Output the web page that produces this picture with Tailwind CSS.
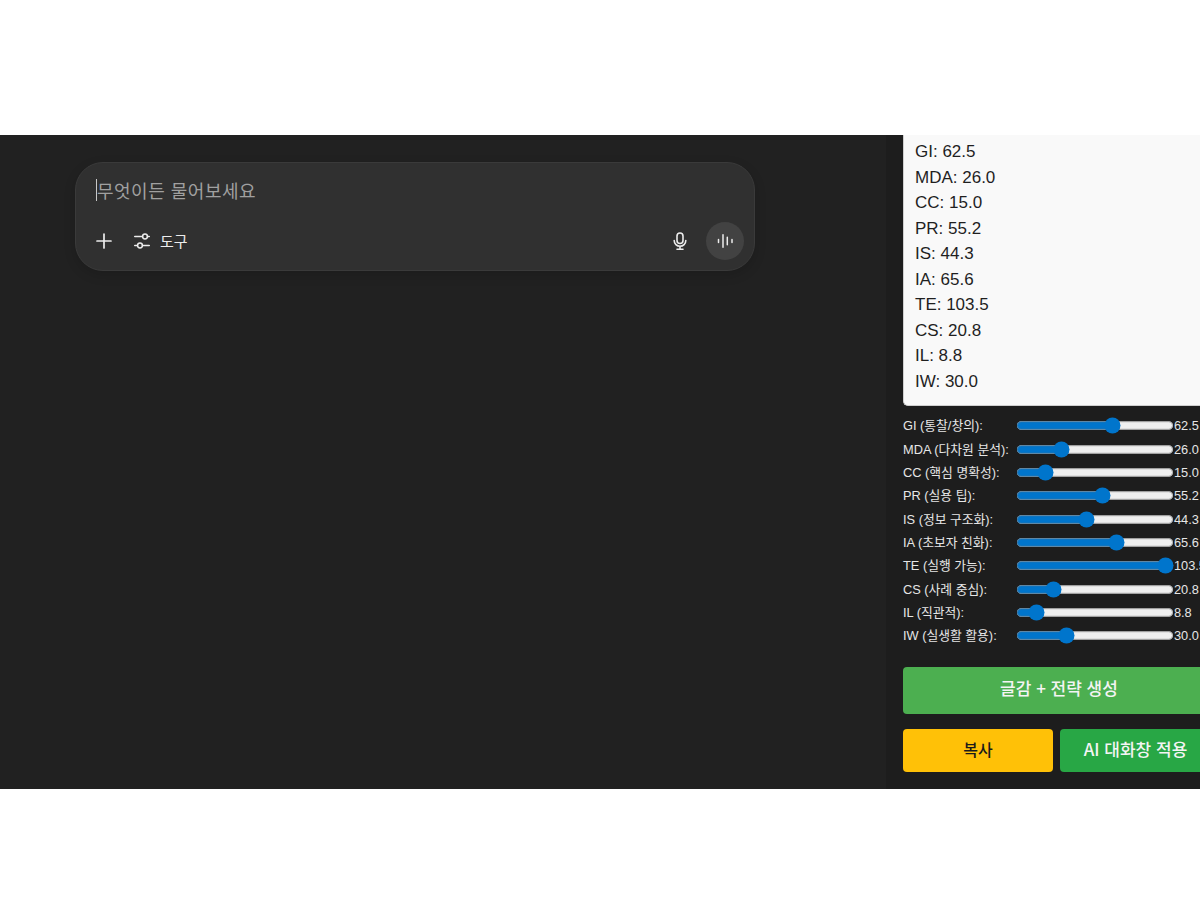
<!DOCTYPE html>
<html lang="ko">
  <head>
    <meta charset="UTF-8">
    <title>Chat</title>
    <script src="https://cdn.jsdelivr.net/npm/@tailwindcss/browser@4"></script>
  </head>
  <body class="bg-white font-['Liberation_Sans','Noto_Sans_CJK_KR',sans-serif] overflow-hidden">
    <div class="h-[900px] w-[1200px] pt-[135px] pb-[111px]">
      <div class="flex h-[654px] overflow-hidden bg-[#212121]">
        <!-- chat area -->
        <main class="w-[886px] flex-none pt-[27px] pl-[75px]">
          <div class="h-[109px] w-[680px] rounded-[28px] border border-[#3a3a3a] bg-[#303030] shadow-[0_4px_12px_rgba(0,0,0,0.15)] pt-[15px] px-[20px]">
            <div class="flex h-[24px] items-center text-[18px] tracking-[0.5px] text-[#a0a0a0] font-['Noto_Sans_CJK_KR',sans-serif]">
              <span class="h-[22px] w-px bg-[#c8c8c8]"></span>무엇이든 물어보세요
            </div>
            <div class="mt-[20px] flex h-[38px] items-center">
              <svg class="-ml-px h-[18px] w-[18px]" viewBox="0 0 18 18" fill="none" stroke="#ececec" stroke-width="1.7" stroke-linecap="round"><path d="M9 2v14M2 9h14"/></svg>
              <svg class="ml-[21px] h-[16px] w-[16px]" viewBox="0 0 16 16" fill="none" stroke="#ececec" stroke-width="1.5" stroke-linecap="round"><path d="M.7 3.5h7.8M13.5 3.5h1.8M.7 12.5h2.3M8.5 12.5h6.8"/><circle cx="11" cy="3.5" r="2.4"/><circle cx="6" cy="12.5" r="2.4"/></svg>
              <span class="ml-[10px] text-[15px] text-[#ececec] font-['Noto_Sans_CJK_KR',sans-serif]">도구</span>
              <svg class="ml-auto h-[20px] w-[20px]" viewBox="0 0 20 20" fill="none" stroke="#ececec" stroke-width="1.6" stroke-linecap="round"><rect x="7" y="2" width="6" height="10.5" rx="3"/><path d="M4.2 9.5a5.8 5.8 0 0 0 11.6 0M10 15.5v2.5M7 18.2h6"/></svg>
              <span class="ml-[16px] -mr-[10px] flex h-[38px] w-[38px] items-center justify-center rounded-full bg-[#424242]">
                <svg class="h-[18px] w-[18px]" viewBox="0 0 18 18" fill="none" stroke="#ececec" stroke-width="1.5" stroke-linecap="round"><path d="M2.5 7.5v3M7 2.7v12.6M11.3 5.2v7.6M16 7.5v3"/></svg>
              </span>
            </div>
          </div>
        </main>

        <!-- side panel -->
        <aside class="flex w-[324px] flex-none flex-col justify-end bg-[#1d1d1d] pl-[17px] pb-[17px] text-[#e6e6e6]">
          <div class="rounded-b-[5px] border-b border-l border-[#cfcfcf] bg-[#f9f9f9] pl-[11px] pt-[4.5px] pb-[10.5px] text-[17px] leading-[25.5px] text-[#1f1f1f]">
            <div>GI: 62.5</div>
            <div>MDA: 26.0</div>
            <div>CC: 15.0</div>
            <div>PR: 55.2</div>
            <div>IS: 44.3</div>
            <div>IA: 65.6</div>
            <div>TE: 103.5</div>
            <div>CS: 20.8</div>
            <div>IL: 8.8</div>
            <div>IW: 30.0</div>
          </div>

          <div class="mt-[8.5px] text-[12.8px]">
            <label class="flex h-[23.33px] items-center"><span class="w-[113px] flex-none whitespace-nowrap">GI (통찰/창의):</span><input type="range" min="0" max="100" step="0.1" value="62.5" class="h-[16px] w-[149px] flex-none accent-[#0075cc] [zoom:1.06]"><span>62.5</span></label>
            <label class="flex h-[23.33px] items-center"><span class="w-[113px] flex-none whitespace-nowrap">MDA (다차원 분석):</span><input type="range" min="0" max="100" step="0.1" value="26" class="h-[16px] w-[149px] flex-none accent-[#0075cc] [zoom:1.06]"><span>26.0</span></label>
            <label class="flex h-[23.33px] items-center"><span class="w-[113px] flex-none whitespace-nowrap">CC (핵심 명확성):</span><input type="range" min="0" max="100" step="0.1" value="15" class="h-[16px] w-[149px] flex-none accent-[#0075cc] [zoom:1.06]"><span>15.0</span></label>
            <label class="flex h-[23.33px] items-center"><span class="w-[113px] flex-none whitespace-nowrap">PR (실용 팁):</span><input type="range" min="0" max="100" step="0.1" value="55.2" class="h-[16px] w-[149px] flex-none accent-[#0075cc] [zoom:1.06]"><span>55.2</span></label>
            <label class="flex h-[23.33px] items-center"><span class="w-[113px] flex-none whitespace-nowrap">IS (정보 구조화):</span><input type="range" min="0" max="100" step="0.1" value="44.3" class="h-[16px] w-[149px] flex-none accent-[#0075cc] [zoom:1.06]"><span>44.3</span></label>
            <label class="flex h-[23.33px] items-center"><span class="w-[113px] flex-none whitespace-nowrap">IA (초보자 친화):</span><input type="range" min="0" max="100" step="0.1" value="65.6" class="h-[16px] w-[149px] flex-none accent-[#0075cc] [zoom:1.06]"><span>65.6</span></label>
            <label class="flex h-[23.33px] items-center"><span class="w-[113px] flex-none whitespace-nowrap">TE (실행 가능):</span><input type="range" min="0" max="100" step="0.1" value="100" class="h-[16px] w-[149px] flex-none accent-[#0075cc] [zoom:1.06]"><span>103.5</span></label>
            <label class="flex h-[23.33px] items-center"><span class="w-[113px] flex-none whitespace-nowrap">CS (사례 중심):</span><input type="range" min="0" max="100" step="0.1" value="20.8" class="h-[16px] w-[149px] flex-none accent-[#0075cc] [zoom:1.06]"><span>20.8</span></label>
            <label class="flex h-[23.33px] items-center"><span class="w-[113px] flex-none whitespace-nowrap">IL (직관적):</span><input type="range" min="0" max="100" step="0.1" value="8.8" class="h-[16px] w-[149px] flex-none accent-[#0075cc] [zoom:1.06]"><span>8.8</span></label>
            <label class="flex h-[23.33px] items-center"><span class="w-[113px] flex-none whitespace-nowrap">IW (실생활 활용):</span><input type="range" min="0" max="100" step="0.1" value="30" class="h-[16px] w-[149px] flex-none accent-[#0075cc] [zoom:1.06]"><span>30.0</span></label>
          </div>

          <button class="mt-[19.5px] h-[47px] w-[308px] flex-none rounded-[4px] bg-[#4caf50] pb-[5px] pl-[4px] text-[17px] font-medium text-[#f4f4f4] font-['Noto_Sans_CJK_KR',sans-serif]">글감 + 전략 생성</button>
          <div class="mt-[15px] flex w-[308px] flex-none gap-[7px]">
            <button class="h-[43px] w-[150px] rounded-[4px] bg-[#ffc107] pb-[4px] text-[16px] font-medium text-[#1a1a1a] font-['Noto_Sans_CJK_KR',sans-serif]">복사</button>
            <button class="h-[43px] w-[151px] rounded-[4px] bg-[#28a745] pb-[4px] text-[17px] font-medium text-[#f4f4f4] font-['Noto_Sans_CJK_KR',sans-serif]">AI 대화창 적용</button>
          </div>
        </aside>
      </div>
    </div>
  </body>
</html>
